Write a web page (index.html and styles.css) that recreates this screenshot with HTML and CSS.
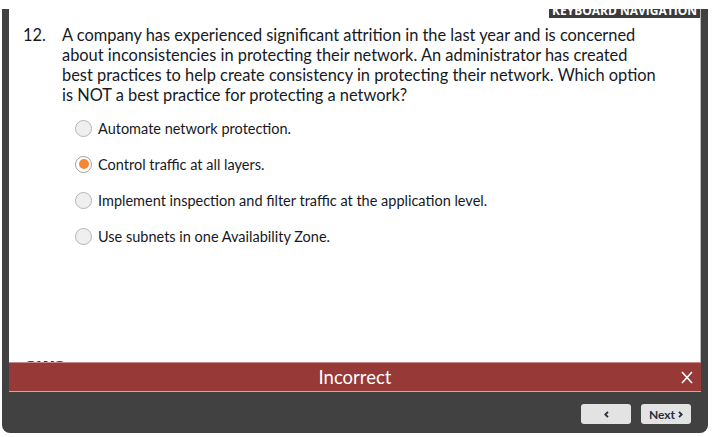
FILE: index.html
```html
<!DOCTYPE html>
<html lang="en">
<head>
<meta charset="utf-8">
<title>Question 12</title>
<link rel="stylesheet" href="styles.css">
</head>
<body>
<div class="frame">
  <div class="content">
    <div class="topbar"><div class="kbd"><span class="kbd-text">KEYBOARD NAVIGATION</span></div></div>
    <div class="question">
      <span class="num">12.</span>
      <p class="qtext">A company has experienced significant attrition in the last year and is concerned<br>about inconsistencies in protecting their network. An administrator has created<br>best practices to help create consistency in protecting their network. Which option<br>is NOT a best practice for protecting a network?</p>
    </div>
    <ul class="options">
      <li class="option"><span class="radio"></span><span>Automate network protection.</span></li>
      <li class="option"><span class="radio checked"></span><span>Control traffic at all layers.</span></li>
      <li class="option"><span class="radio"></span><span>Implement inspection and filter traffic at the application level.</span></li>
      <li class="option"><span class="radio"></span><span>Use subnets in one Availability Zone.</span></li>
    </ul>
    <div class="logo">aws</div>
  </div>
  <div class="banner">
    <span class="banner-text">Incorrect</span>
    <svg class="close" width="12" height="13" viewBox="0 0 12 13" aria-label="Close">
      <path d="M1 1 L11 12 M11 1 L1 12" stroke="#ffffff" stroke-width="1.6" fill="none"/>
    </svg>
  </div>
  <div class="footer">
    <button class="btn" aria-label="Previous">
      <svg class="chev" width="5" height="7" viewBox="0 0 5 7"><path d="M4 0.8 L1.3 3.5 L4 6.2" stroke="#232f3e" stroke-width="1.8" fill="none"/></svg>
    </button>
    <button class="btn">Next
      <svg class="chev" width="5" height="7" viewBox="0 0 5 7"><path d="M1 0.8 L3.7 3.5 L1 6.2" stroke="#232f3e" stroke-width="1.8" fill="none"/></svg>
    </button>
  </div>
</div>
</body>
</html>
```
FILE: styles.css
```css
html, body {
  margin: 0;
  padding: 0;
  background: #ffffff;
}
body {
  width: 713px;
  height: 437px;
  overflow: hidden;
  font-family: Lato, "Open Sans", sans-serif;
}
.frame {
  margin: 9px 5px 0 2px;
  width: 706px;
  height: 424px;
  box-sizing: border-box;
  background: #414141;
  border-radius: 0 0 8px 8px;
  padding: 0 7px 0 7px;
  display: flex;
  flex-direction: column;
}
.content {
  background: #ffffff;
  height: 353px;
  flex: none;
  overflow: hidden;
  display: flex;
  flex-direction: column;
  border-right: 1px solid #b8b8b8;
}
.topbar {
  display: flex;
  justify-content: flex-end;
}
.kbd {
  width: 151px;
  height: 9px;
  background: #3b3b3b;
  color: #ffffff;
  font-family: "Open Sans", sans-serif;
  font-weight: 700;
  font-size: 12px;
  line-height: 12px;
  text-align: center;
  overflow: hidden;
}
.kbd-text {
  display: block;
  margin-top: -4px;
}
.question {
  display: flex;
  margin: 7px 10px 0 14px;
  color: #16191f;
  font-size: 16.4px;
  line-height: 20px;
}
.num {
  width: 39px;
  flex: none;
}
.qtext {
  margin: 0;
  white-space: nowrap;
}
.options {
  list-style: none;
  margin: 13px 0 0 66px;
  padding: 0;
  display: flex;
  flex-direction: column;
  gap: 16px;
}
.option {
  display: flex;
  align-items: center;
  gap: 6px;
  height: 20px;
  font-size: 14.5px;
  color: #16191f;
}
.radio {
  width: 15px;
  height: 15px;
  border: 1px solid #b5b5b5;
  border-radius: 50%;
  background: #efefef;
  flex: none;
  display: flex;
  align-items: center;
  justify-content: center;
}
.radio.checked {
  background: #ffffff;
  border-color: #9e9e9e;
}
.radio.checked::after {
  content: "";
  width: 10px;
  height: 10px;
  border-radius: 50%;
  background: #f58634;
}
.logo {
  margin-top: auto;
  margin-left: 16px;
  margin-bottom: -11px;
  font-family: "Open Sans", sans-serif;
  font-weight: 700;
  font-size: 20px;
  line-height: 16px;
  color: #414141;
}
.banner {
  height: 30px;
  flex: none;
  box-sizing: border-box;
  background: #963937;
  border-top: 1px solid #c58a88;
  border-bottom: 1px solid #c9a9a8;
  display: flex;
  align-items: center;
  justify-content: center;
  position: relative;
  color: #ffffff;
}
.banner-text {
  font-size: 18.5px;
}
.close {
  position: absolute;
  right: 8px;
  top: 8px;
}
.footer {
  flex: 1;
  display: flex;
  justify-content: flex-end;
  align-items: flex-start;
  gap: 10px;
  padding: 12px 10px 0 0;
}
.btn {
  width: 50px;
  height: 20px;
  border: none;
  border-radius: 3px;
  background: #e3e3e3;
  color: #232f3e;
  font-family: Lato, sans-serif;
  font-weight: 700;
  font-size: 12px;
  padding: 0;
  display: flex;
  align-items: center;
  justify-content: center;
  gap: 3px;
}
.chev {
  display: block;
}
```
